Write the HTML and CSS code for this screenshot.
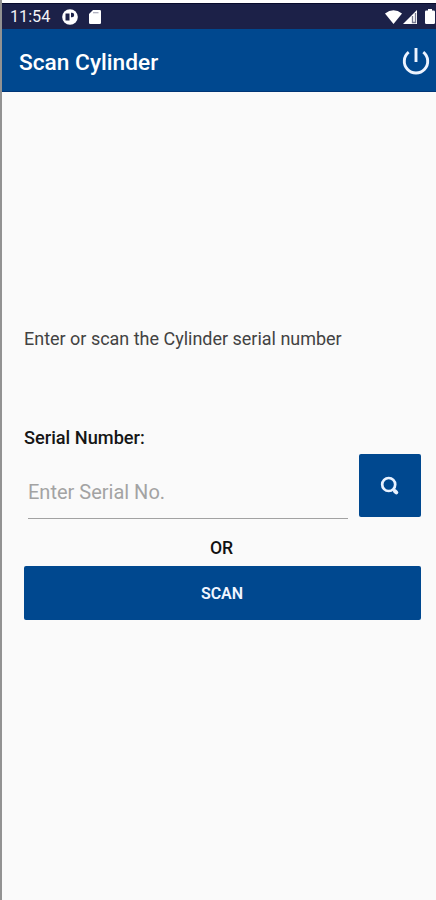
FILE: index.html
```
<!DOCTYPE html>
<html lang="en">
<head>
<meta charset="utf-8">
<title>Scan Cylinder</title>
<link rel="stylesheet" href="styles.css">
</head>
<body>
<div class="screen">
  <div class="status">
    <span class="time">11:54</span>
    <svg class="app-dot" width="16" height="16" viewBox="0 0 16 16"><circle cx="8" cy="8" r="7.800" fill="#fff"/><path d="M3.500 4.500h4v7h-4z" fill="#1c2148"/><path d="M9 3.800h1a2.200 2.200 0 0 1 0 4.400H9z" fill="#1c2148"/></svg>
    <svg class="card" width="12" height="14" viewBox="0 0 12 14"><path d="M4 0h6.700Q12 0 12 1.300v11.400q0 1.300-1.300 1.300H1.300Q0 14 0 12.700V4z" fill="#fff"/><path d="M4 2.700h5.500" stroke="#a9aaba" stroke-width="1.200"/></svg>
    <svg class="wifi" width="17" height="14" viewBox="0 0 17 14"><path d="M0 3.500Q8.500-3 17 3.500L8.500 14z" fill="#fff"/></svg>
    <svg class="signal" width="14" height="14" viewBox="0 0 14 14"><path d="M14 0v14H0z" fill="#fff"/><path d="M9.500 6v6.500h3V3" fill="none" stroke="#777990" stroke-width="1.300"/></svg>
    <svg class="battery" width="10" height="15" viewBox="0 0 10 15"><path d="M3 0h4v1.500h1.700Q10 1.500 10 2.800v10.900Q10 15 8.700 15H1.300Q0 15 0 13.700V2.800Q0 1.500 1.300 1.500H3z" fill="#fff"/></svg>
  </div>
  <header class="bar">
    <h1>Scan Cylinder</h1>
    <svg class="power" width="28" height="28" viewBox="0 0 28 28" fill="none" stroke="#edf4ff" stroke-width="2.900"><path d="M14 1v14M6.700 5.200a11.700 11.700 0 1 0 14.600 0"/></svg>
  </header>
  <main>
    <p class="hint">Enter or scan the Cylinder serial number</p>
    <label class="label" for="serial">Serial Number:</label>
    <div class="row">
      <input id="serial" class="field" type="text" placeholder="Enter Serial No.">
      <button class="search" aria-label="Search"><svg width="20" height="20" viewBox="0 0 20 20" fill="none" stroke="#e9f2ff"><circle cx="8.700" cy="8.500" r="6.500" stroke-width="2.700"/><path d="M13 13l1 1" stroke-width="2.500"/><path d="M15 15.200l1.300 1.200" stroke-width="4" stroke-linecap="round"/></svg></button>
    </div>
    <div class="or">OR</div>
    <button class="scan">SCAN</button>
  </main>
</div>
</body>
</html>
```
FILE: styles.css
```
* { box-sizing: border-box; }
body { margin: 0; background: #fff; font-family: Roboto, sans-serif; }
.screen { height: 900px; padding-top: 3px; border-left: 2px solid #929292; background: linear-gradient(#fff 3px, #fafafa 3px); overflow: hidden; }
.status { height: 26px; display: flex; align-items: center; background: #1c2148; border-top: 1px solid #080b2c; color: #f3f3f7; padding-left: 8px; }
.time { width: 52px; font-size: 16.200px; line-height: 25px; white-space: nowrap; }
.card { margin-left: 11px; }
.wifi { margin-left: auto; }
.signal { margin-left: 1px; }
.battery { margin: 0 1px 0 8px; }
.bar { height: 63px; display: flex; align-items: center; justify-content: space-between; padding: 0 6px 0 17px; background: #00488f; border-bottom: 1px solid #003576; color: #fff; }
h1 { margin: 5px 0 0; font-size: 22.700px; line-height: 28px; font-weight: 500; white-space: nowrap; }
.power { margin-top: 1px; }
main { padding: 234px 16px 0 22px; }
.hint { margin: 0; height: 26px; line-height: 26px; font-size: 17.980px; color: #424242; white-space: nowrap; }
.label { display: block; margin-top: 74px; height: 24px; line-height: 24px; font-size: 18.200px; font-weight: 500; color: #161616; }
.row { display: flex; justify-content: space-between; margin-top: 4px; height: 64px; padding-left: 4px; }
.field { width: 320px; height: 65px; padding: 12px 0 0; border: 0; border-bottom: 1.500px solid #a2a2a2; background: none; font: 20px Roboto, sans-serif; outline: 0; }
.field::placeholder { color: #a3a3a3; opacity: 1; }
button { border: 0; padding: 0; border-radius: 2px; background: #00488f; color: #f1f6ff; font-family: Roboto, sans-serif; }
.search { width: 62px; height: 63px; margin-right: -1px; display: flex; align-items: center; justify-content: center; }
.or { height: 24px; margin: 18px 1px 0 0; line-height: 24px; text-align: center; font-size: 17.600px; font-weight: 500; color: #111; }
.scan { display: block; width: calc(100% + 1px); height: 54px; margin-top: 6px; padding-right: 1px; font-size: 16px; font-weight: 600; }
```
